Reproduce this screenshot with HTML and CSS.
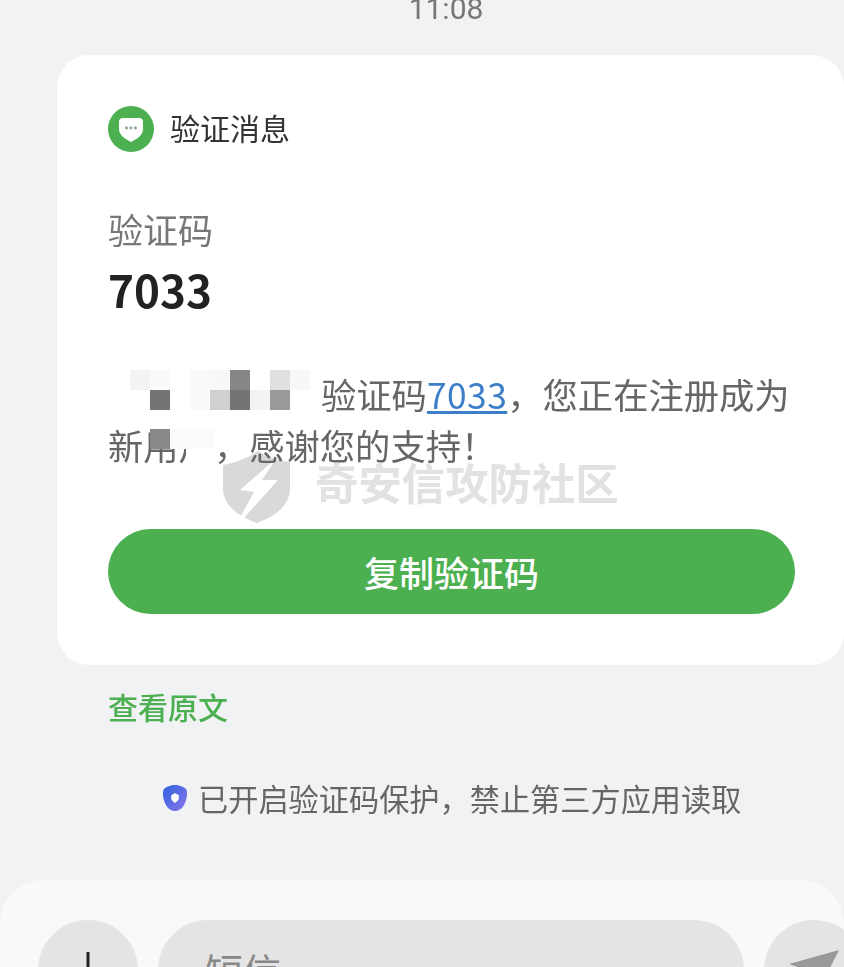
FILE: index.html
```html
<!DOCTYPE html>
<html lang="zh">
<head>
    <meta charset="UTF-8">
    <meta name="viewport" content="width=device-width, initial-scale=1.0">
    <title>验证消息</title>
    <link rel="stylesheet" href="styles.css">
</head>
<body>

    <div class="time">11:08</div>

    <div class="card">
        <div class="card-head">
            <svg class="head-icon" viewBox="0 0 46 46">
                <circle cx="23" cy="23" r="23" fill="#4caf50"/>
                <path d="M15 12 H31 Q35 12 35 16 V23 C35 29 29 33 23 36 C17 33 11 29 11 23 V16 Q11 12 15 12 Z" fill="#fff"/>
                <circle cx="18.5" cy="22" r="1.4" fill="#7f9f84"/>
                <circle cx="23" cy="22" r="1.4" fill="#7f9f84"/>
                <circle cx="27.5" cy="22" r="1.4" fill="#7f9f84"/>
            </svg>
            <span class="head-title">验证消息</span>
        </div>

        <div class="code-label">验证码</div>
        <div class="code-value">7033</div>

        <div class="message">
            <span class="mosaic">
                <span class="mosaic-grid">
                    <i class="c3"></i><i class="c4"></i><i></i><i class="c4"></i><i class="c5"></i><i class="c8"></i><i></i><i class="c6"></i><i class="c5"></i>
                    <i></i><i class="c9"></i><i></i><i class="c4"></i><i class="c7"></i><i class="c9"></i><i class="c3"></i><i class="c10"></i><i></i>
                </span>
            </span>验证码<a class="code-link">7033</a>，您正在注册成为新用户，感谢您的支持！
            <span class="patch patch-dark"></span>
            <span class="patch patch-top"></span>
            <span class="patch patch-low"></span>
        </div>

        <div class="copy-btn">复制验证码</div>

        <div class="watermark">
            <svg class="wm-shield" viewBox="0 0 70 80">
                <path d="M1 15 Q20 12 36 1 Q50 10 68 12 L68 40 Q66 62 35 73 Q3 62 1 40 Z" fill="#d9d9d9"/>
                <path d="M50 12 L18 40 L32 42 L12 79 L56 30 L40 30 L52 12 Z" fill="#fff"/>
            </svg>
            <span class="wm-text">奇安信攻防社区</span>
        </div>
    </div>

    <div class="source-link">查看原文</div>

    <div class="notice">
        <svg class="notice-icon" viewBox="0 0 26 28">
            <defs>
                <linearGradient id="shieldBlue" x1="0" y1="0" x2="1" y2="1">
                    <stop offset="0" stop-color="#2f62e0"/>
                    <stop offset="1" stop-color="#8a78e8"/>
                </linearGradient>
            </defs>
            <path d="M13 1 C17 1 22 3 24 5 C26 8 25 16 22 21 C20 25 16 27 13 27 C10 27 6 25 4 21 C1 16 0 8 2 5 C4 3 9 1 13 1 Z" fill="url(#shieldBlue)"/>
            <path d="M13 9 L17 11.5 L16.5 16 L13 19 L9.5 16 L9 11.5 Z" fill="#fff"/>
        </svg>
        <span class="notice-text">已开启验证码保护，禁止第三方应用读取</span>
    </div>

    <div class="input-bar">
        <div class="round-btn">
            <svg class="plus-icon" viewBox="0 0 36 36">
                <path d="M18 0 V36 M0 18 H36" stroke="#222" stroke-width="3"/>
            </svg>
        </div>
        <div class="sms-input">短信</div>
        <div class="round-btn send-btn">
            <svg class="send-icon" viewBox="0 0 50 40">
                <path d="M0 14 L50 0 L30 40 L22 22 Z" fill="#999"/>
            </svg>
        </div>
    </div>

</body>
</html>
```

FILE: styles.css
```css
html, body {
    height: 967px;
    overflow: hidden;
}
body {
    margin: 0;
    background-color: #f1f2f4;
    font-family: "Noto Sans CJK SC", "Noto Sans", sans-serif;
    color: #666;
}
.time {
    height: 55px;
    margin-top: -11px;
    padding-bottom: 11px;
    padding-left: 48px;
    box-sizing: border-box;
    text-align: center;
    font-family: Roboto, sans-serif;
    font-size: 30px;
    line-height: 40px;
    color: #777;
    filter: blur(0.4px);
}
.card {
    position: relative;
    box-sizing: border-box;
    width: 787px;
    height: 610px;
    margin-top: 11px;
    margin-left: 57px;
    padding: 51px 49px 51px 51px;
    background-color: #fff;
    border-radius: 32px;
}
.card-head {
    display: flex;
    align-items: center;
    gap: 16px;
    height: 46px;
}
.head-icon {
    width: 46px;
    height: 46px;
    flex: none;
}
.head-title {
    margin-top: -4px;
    font-size: 30px;
    color: #333;
    filter: blur(0.4px);
}
.code-label {
    margin-top: 52px;
    font-size: 35px;
    line-height: 50px;
    color: #777;
    filter: blur(0.4px);
}
.code-value {
    margin-top: 5px;
    font-size: 44px;
    line-height: 60px;
    font-weight: 700;
    color: #222;
    filter: blur(0.4px);
}
.message {
    position: relative;
    z-index: 1;
    margin-top: 49px;
    font-size: 35.3px;
    line-height: 51px;
    color: #666;
    filter: blur(0.4px);
}
.mosaic {
    position: relative;
    display: inline-block;
    width: 180px;
    height: 0;
    margin-left: 22px;
    margin-right: 11px;
}
.mosaic-grid {
    position: absolute;
    left: 0;
    top: -39px;
    display: grid;
    grid-template-columns: repeat(9, 20px);
    grid-auto-rows: 20px;
}
.c3 { background-color: #f3f3f3; }
.c4 { background-color: #fafafa; }
.c5 { background-color: #f8f8f8; }
.c6 { background-color: #e0e0e0; }
.c7 { background-color: #d0d0d0; }
.c8 { background-color: #868686; }
.c9 { background-color: #747474; }
.c10 { background-color: #999; }
.code-link {
    color: #3d7ec9;
    letter-spacing: 0.5px;
    text-decoration: underline;
}
.patch {
    position: absolute;
}
.patch-dark {
    left: 42px;
    top: 61px;
    width: 20px;
    height: 20px;
    background-color: #888;
}
.patch-top {
    left: 62px;
    top: 61px;
    width: 44px;
    height: 20px;
    background-color: #fbfbfb;
}
.patch-low {
    left: 78px;
    top: 81px;
    width: 28px;
    height: 21px;
    background-color: #fff;
}
.copy-btn {
    margin-top: 59px;
    height: 85px;
    background-color: #4caf50;
    border-radius: 43px;
    color: #fff;
    font-size: 35px;
    font-weight: 500;
    line-height: 85px;
    text-align: center;
}
.watermark {
    position: absolute;
    left: 165px;
    top: 395px;
    display: flex;
    align-items: center;
    gap: 23px;
}
.wm-shield {
    width: 70px;
    height: 80px;
    flex: none;
}
.wm-text {
    font-size: 43.4px;
    font-weight: 700;
    line-height: 80px;
    color: #e2e2e2;
    white-space: nowrap;
    margin-top: -18px;
    filter: blur(0.5px);
}
.source-link {
    margin-top: 21px;
    padding-left: 108px;
    font-size: 30px;
    font-weight: 500;
    line-height: 40px;
    color: #4caf50;
    filter: blur(0.4px);
}
.notice {
    display: flex;
    align-items: center;
    gap: 10px;
    margin-top: 52px;
    padding-left: 162px;
    line-height: 40px;
    color: #666;
}
.notice-text {
    font-size: 30.2px;
    filter: blur(0.4px);
}
.notice-icon {
    width: 26px;
    height: 28px;
    flex: none;
}
.input-bar {
    display: flex;
    gap: 20px;
    box-sizing: border-box;
    height: 87px;
    overflow: hidden;
    margin-top: 62px;
    padding: 40px 0 0 38px;
    background-color: #f9f9fa;
    border-radius: 44px 44px 0 0;
}
.round-btn {
    display: flex;
    align-items: center;
    justify-content: center;
    flex: none;
    width: 100px;
    height: 100px;
    border-radius: 50%;
    background-color: #e4e4e4;
}
.plus-icon {
    width: 36px;
    height: 36px;
}
.send-icon {
    width: 50px;
    height: 40px;
}
.sms-input {
    flex: none;
    box-sizing: border-box;
    width: 586px;
    height: 100px;
    padding-left: 47px;
    border-radius: 50px;
    background-color: #e4e4e4;
    font-size: 38px;
    line-height: 100px;
    color: #888;
}
```
